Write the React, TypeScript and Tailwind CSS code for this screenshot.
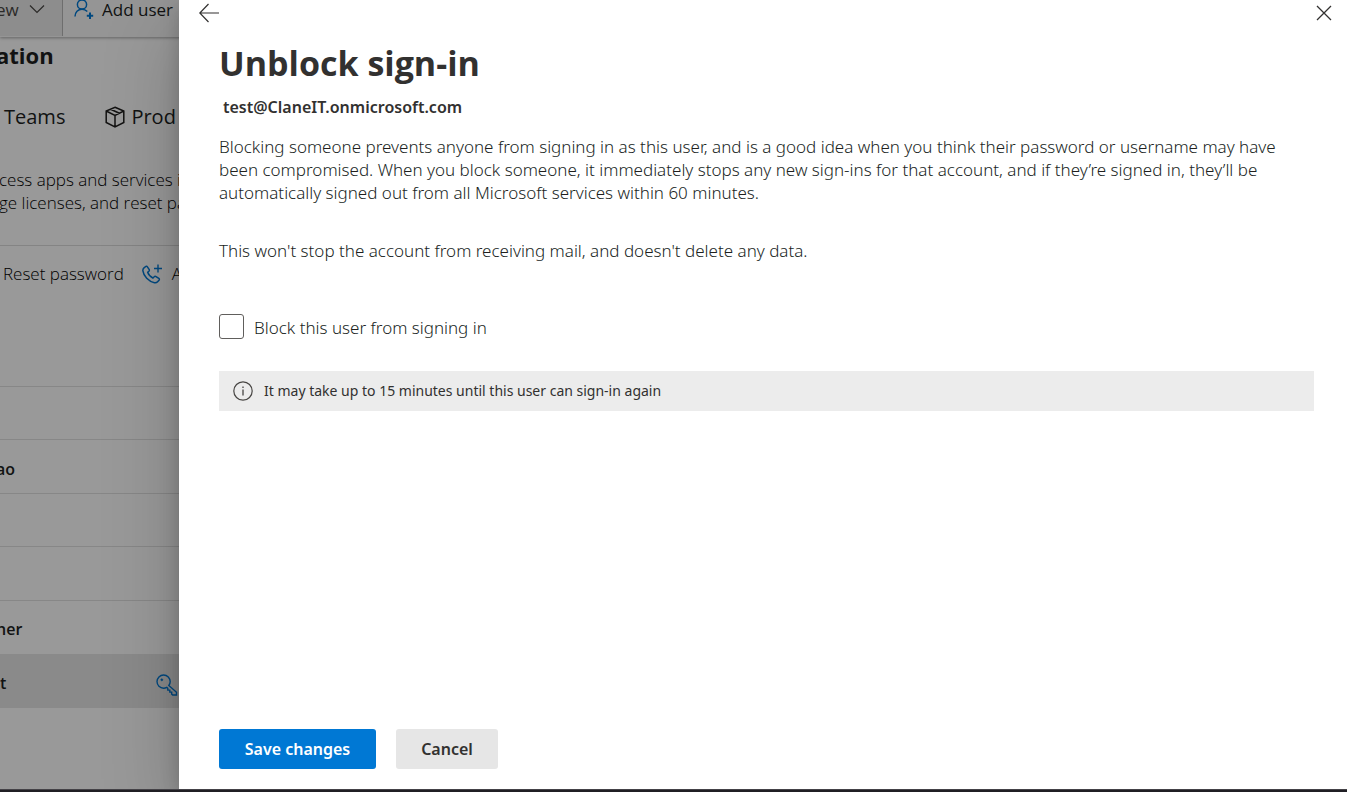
import type { ReactNode } from "react";

type IconProps = { className?: string; children: ReactNode; viewBox?: string };

function Icon({ className, children, viewBox = "0 0 20 20" }: IconProps) {
  return (
    <svg className={className} viewBox={viewBox} fill="none" stroke="currentColor" strokeWidth="1.3" aria-hidden="true">
      {children}
    </svg>
  );
}

function UserAddIcon() {
  return (
    <Icon className="h-5 w-5 shrink-0 text-[#0078d4]">
      <circle cx="8" cy="4.500" r="4.600" strokeWidth="1.500" />
      <path d="M1 16.500c0-4.200 3-7.300 7-7.300 2.200 0 4 .9 5.300 2.300" strokeWidth="1.500" />
      <path d="M16 12.500v6.500M12.800 15.800h6.400" strokeWidth="2" />
    </Icon>
  );
}

function BoxIcon() {
  return (
    <Icon className="h-[22px] w-5 shrink-0" viewBox="0 0 20 22">
      <path d="M10 1.200 18.800 5v11.500L10 20.800 1.200 16.500V5z M1.200 5 10 9.300 18.800 5 M10 9.300v11.500 M5.600 3.200l8.800 4.100" strokeWidth="1.500" />
    </Icon>
  );
}

function PhoneAddIcon() {
  return (
    <Icon className="h-5 w-5 shrink-0 text-[#0078d4]">
      <path
        d="M2.200 3.700 3.500 2.600c.7-.5 1.400-.4 1.900.3l1.700 2.500c.4.7.3 1.300-.2 1.800L5.700 8.300c.7 2.200 2.700 4.500 5.200 5.700l1.300-1.200c.5-.5 1.200-.6 1.800-.2l2.800 1.800c.6.5.7 1.200.2 1.800l-1.400 1.600c-.8.9-1.900 1.200-3.100 1C6.500 17.600 1.600 12.100.9 6.900c-.2-1.300.3-2.400 1.300-3.200z"
        strokeWidth="1.500"
      />
      <path d="M16 .5v8M12 4.500h8" strokeWidth="1.400" />
    </Icon>
  );
}

function KeyIcon() {
  return (
    <Icon className="h-[22px] w-[22px] shrink-0 text-[#0078d4]" viewBox="0 0 22 22">
      <path
        d="M12.800 11.500c.9-1.100 1.400-2.400 1.400-3.900A6.600 6.600 0 1 0 7.600 14.200c1.200 0 2.200-.3 3.200-.8l1 1v1.700h2v2h1.900v2l1 .9h3.800v-2.800z"
        strokeWidth="1.400"
      />
      <circle cx="5.800" cy="5.800" r="1" fill="currentColor" strokeWidth=".6" />
    </Icon>
  );
}

const users = ["", "ao", "", "", "ner", "t"];

function UsersPage() {
  return (
    <main className="h-full overflow-hidden bg-white text-[#201f1e]">
      <div className="flex h-[37px] items-start bg-[#f9f9f9] text-[17px] shadow-[0_1px_3px_rgba(0,0,0,0.35)]">
        <button className="flex h-9 w-[63px] shrink-0 items-start border-r border-[#b8b8b8] bg-[#ebebeb] text-[#484644]">
          <span className="-ml-1 leading-5">ew</span>
          <Icon className="ml-2.5 mt-1 h-2.5 w-4" viewBox="0 0 16 10">
            <path d="M1 1.500 8 8.500l7-7" strokeWidth="1.200" />
          </Icon>
        </button>
        <button className="flex items-start gap-2 pl-[11px]">
          <UserAddIcon />
          <span className="whitespace-nowrap leading-5">Add user</span>
        </button>
      </div>
      <h2 className="-ml-1 mt-1 text-[22px] font-bold leading-7">ation</h2>
      <nav className="mt-8 flex h-8 items-center gap-10 whitespace-nowrap pl-1 text-[20px]">
        <a href="#teams">Teams</a>
        <a href="#products" className="flex items-center gap-1.5">
          <BoxIcon />
          Prod
        </a>
      </nav>
      <p className="-ml-px mt-[35px] whitespace-nowrap text-[17px] font-light leading-[23px] text-black">
        cess apps and services i
        <br />
        ge licenses, and reset pa
      </p>
      <div className="mt-[31px] flex items-center gap-[18px] whitespace-nowrap border-t border-[#dddddd] pl-[3px] pt-4 text-[17px] font-light leading-6 text-black">
        <button>Reset password</button>
        <button className="flex items-center gap-2.5">
          <PhoneAddIcon />A
        </button>
      </div>
      <table className="mt-[100px] w-full border-collapse text-[16px] font-semibold">
        <tbody>
          {users.map((name, i) => (
            <tr key={i} className="h-[53px] border-t border-[#e2e2e2] even:h-[54px] last:border-0 last:bg-[#e6e6e6]">
              <td className="w-[156px] p-0 pt-1">
                <span className={name.length > 1 ? "-ml-1" : ""}>{name}</span>
              </td>
              <td className="p-0 pt-2">{i === 5 && <KeyIcon />}</td>
            </tr>
          ))}
        </tbody>
      </table>
    </main>
  );
}

function SignInPanel() {
  return (
    <section
      role="dialog"
      aria-labelledby="panel-title"
      className="flex h-full flex-col bg-white font-['Noto_Sans','Open_Sans',sans-serif] text-[#323130] shadow-[0_32px_72px_rgba(0,0,0,0.22),0_6px_18px_rgba(0,0,0,0.18)]"
    >
      <header className="flex h-[26px] items-center justify-between pl-5 pr-[15px]">
        <button aria-label="Back">
          <Icon className="h-5 w-5" viewBox="0 0 20 20">
            <path d="M20 10H.8M9.500 1 .8 10l8.700 9" strokeWidth="1.200" />
          </Icon>
        </button>
        <button aria-label="Close">
          <Icon className="h-4 w-4" viewBox="0 0 16 16">
            <path d="m1 1 14 14M15 1 1 15" strokeWidth="1.300" />
          </Icon>
        </button>
      </header>
      <div className="flex flex-1 flex-col pb-5 pl-10 pr-[33px]">
        <h1 id="panel-title" className="mt-[15px] font-['Open_Sans','Noto_Sans',sans-serif] text-[34px] font-bold leading-[44px]">
          Unblock sign-in
        </h1>
        <p className="mt-2.5 pl-1 text-[16px] font-semibold leading-6">test@ClaneIT.onmicrosoft.com</p>
        <div className="flex flex-col text-[17px] font-light leading-[23px] text-[#201f1e]">
          <p className="mt-4 pr-5">
            Blocking someone prevents anyone from signing in as this user, and is a good idea when you think their password or username may have been compromised. When you block someone, it immediately stops any new sign-ins for that account, and if they’re signed in, they’ll be automatically signed out from all Microsoft services within 60 minutes.
          </p>
          <p className="mt-[35px]">
            This won't stop the account from receiving mail, and doesn't delete any data.
          </p>
          <div className="mt-[52px] flex items-center gap-2.5">
            <input
              id="block-user"
              type="checkbox"
              className="h-[25px] w-[25px] appearance-none rounded-[3px] border border-[#605e5c] bg-white checked:bg-[#0078d4]"
            />
            <label htmlFor="block-user" className="pt-0.5">Block this user from signing in</label>
          </div>
        </div>
        <div className="mt-8 flex h-10 items-center gap-[11px] bg-[#ececec] px-3.5 text-[14px] leading-6">
          <Icon className="h-5 w-5 shrink-0 text-[#484644]">
            <circle cx="10" cy="10" r="9.200" strokeWidth="1.200" />
            <path d="M10 8.500v6M10 5.500v1.500" strokeWidth="1.300" />
          </Icon>
          It may take up to 15 minutes until this user can sign-in again
        </div>
        <footer className="mt-auto flex gap-5 text-[16px] font-semibold">
          <button className="h-10 w-[157px] rounded-[3px] bg-[#0078d4] text-white">Save changes</button>
          <button className="h-10 w-[102px] rounded-[3px] bg-[#e6e6e6]">Cancel</button>
        </footer>
      </div>
    </section>
  );
}

export default function App() {
  return (
    <div className="flex h-screen flex-col bg-[#201f24] font-['Open_Sans','Noto_Sans',sans-serif]">
      <div className="relative min-h-0 flex-1 overflow-hidden">
        <UsersPage />
        <div className="absolute inset-0 bg-black/40 pl-[179px]">
          <SignInPanel />
        </div>
      </div>
      <div className="h-[3px] border-t border-[#444247]" />
    </div>
  );
}
